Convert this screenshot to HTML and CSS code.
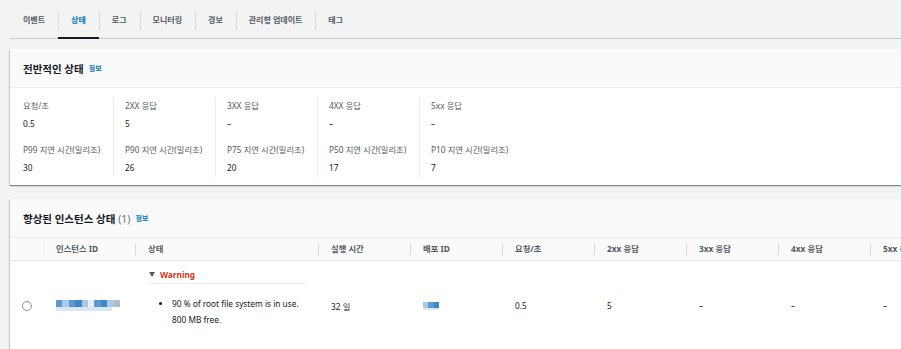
FILE: index.html
```html
<!DOCTYPE html>
<html lang="ko">
  <head>
    <meta charset="UTF-8" />
    <meta name="viewport" content="width=device-width, initial-scale=1.0" />
    <title>상태</title>
    <link rel="stylesheet" href="styles.css">
  </head>
  <body>
    <div class="tabs">
      <div class="tab">이벤트</div>
      <div class="tab active">상태</div>
      <div class="tab">로그</div>
      <div class="tab">모니터링</div>
      <div class="tab">경보</div>
      <div class="tab">관리형 업데이트</div>
      <div class="tab">태그</div>
    </div>

    <div class="panel">
      <div class="panel-head">
        <span class="title">전반적인 상태</span>
        <a class="info">정보</a>
      </div>
      <div class="stats">
        <div class="col">
          <div class="stat"><div class="label">요청/초</div><div class="value">0.5</div></div>
          <div class="stat"><div class="label">P99 지연 시간(밀리초)</div><div class="value">30</div></div>
        </div>
        <div class="col">
          <div class="stat"><div class="label">2XX 응답</div><div class="value">5</div></div>
          <div class="stat"><div class="label">P90 지연 시간(밀리초)</div><div class="value">26</div></div>
        </div>
        <div class="col">
          <div class="stat"><div class="label">3XX 응답</div><div class="value">–</div></div>
          <div class="stat"><div class="label">P75 지연 시간(밀리초)</div><div class="value">20</div></div>
        </div>
        <div class="col">
          <div class="stat"><div class="label">4XX 응답</div><div class="value">–</div></div>
          <div class="stat"><div class="label">P50 지연 시간(밀리초)</div><div class="value">17</div></div>
        </div>
        <div class="col">
          <div class="stat"><div class="label">5xx 응답</div><div class="value">–</div></div>
          <div class="stat"><div class="label">P10 지연 시간(밀리초)</div><div class="value">7</div></div>
        </div>
      </div>
    </div>

    <div class="panel">
      <div class="panel-head">
        <span class="title">향상된 인스턴스 상태 <span class="count">(1)</span></span>
        <a class="info">정보</a>
      </div>
      <table class="grid">
        <thead>
          <tr>
            <th class="c-radio"></th>
            <th class="c-id"><span>인스턴스 ID</span></th>
            <th class="c-status"><span>상태</span></th>
            <th><span>실행 시간</span></th>
            <th><span>배포 ID</span></th>
            <th><span>요청/초</span></th>
            <th><span>2xx 응답</span></th>
            <th><span>3xx 응답</span></th>
            <th><span>4xx 응답</span></th>
            <th><span>5xx 응답</span></th>
          </tr>
        </thead>
        <tbody>
          <tr>
            <td class="c-radio"><span class="radio"></span></td>
            <td class="c-id">
              <span class="mosaic">
                <i class="m1"></i><i class="m2"></i><i class="m1"></i><i class="m3"></i><i class="m2"></i><i class="m4"></i><i class="m1"></i><i class="m3"></i><i class="m2"></i><i class="m5"></i>
              </span>
            </td>
            <td class="c-status">
              <div class="warn"><span class="caret"></span>Warning</div>
              <ul class="causes">
                <li>90 % of root file system is in use. 800 MB free.</li>
              </ul>
            </td>
            <td>32 일</td>
            <td><span class="mosaic small"><i class="m2"></i><i class="m1"></i><i class="m3"></i></span></td>
            <td>0.5</td>
            <td>5</td>
            <td>–</td>
            <td>–</td>
            <td>–</td>
          </tr>
        </tbody>
      </table>
    </div>
  </body>
</html>
```

FILE: styles.css
```css
body {
  margin: 0;
  background-color: #f2f3f3;
  font-family: "Noto Sans", "Noto Sans CJK KR", sans-serif;
  font-size: 8.3px;
  color: #16191f;
  overflow: hidden;
}

.tabs {
  display: flex;
  margin-left: 10px;
  height: 38px;
  border-bottom: 1px solid #c3cbcf;
}

.tab {
  position: relative;
  padding: 0 13px;
  line-height: 40px;
  font-size: 8px;
  font-weight: bold;
  color: #545b64;
}

.tab + .tab::before {
  content: "";
  position: absolute;
  left: 0;
  top: 12px;
  height: 18px;
  border-left: 1px solid #d5dbdb;
}

.tab.active {
  color: #0073bb;
}

.tab.active::after {
  content: "";
  position: absolute;
  left: 0;
  right: 0;
  bottom: -1px;
  height: 2px;
  background-color: #16191f;
}

.panel {
  margin: 10px -40px 14px 10px;
  background-color: #fff;
  box-shadow: 0 1px 1px 0 rgba(0, 28, 36, 0.3), 1px 1px 1px 0 rgba(0, 28, 36, 0.15), -1px 1px 1px 0 rgba(0, 28, 36, 0.15);
}

.panel-head {
  height: 38px;
  padding-left: 13px;
  display: flex;
  align-items: center;
  background-color: #fafafa;
  border-bottom: 1px solid #eaeded;
}

.title {
  font-size: 10.5px;
  font-weight: bold;
}

.count {
  font-weight: normal;
  color: #687078;
}

.info {
  margin-left: 5px;
  font-size: 7px;
  font-weight: bold;
  color: #0073bb;
}

.stats {
  display: flex;
  padding: 9px 0 8px;
}

.col {
  width: 90px;
  padding-left: 11px;
  border-left: 1px solid #eaeded;
}

.col:first-child {
  width: 90px;
  padding-left: 13px;
  border-left: none;
}

.stat + .stat {
  margin-top: 8px;
}

.label {
  line-height: 18px;
  color: #545b64;
}

.value {
  line-height: 18px;
}

.grid {
  border-collapse: collapse;
  table-layout: fixed;
  width: 950px;
}

.grid th {
  height: 22px;
  padding: 0;
  text-align: left;
  font-weight: bold;
  color: #545b64;
  background-color: #fafafa;
  border-bottom: 1px solid #eaeded;
  width: 92px;
}

.grid th span {
  display: block;
  padding-left: 12px;
  border-left: 1px solid #d5dbdb;
  line-height: 12px;
}

.grid th.c-id span {
  padding-left: 11px;
  border-left-color: #eaeded;
}

.grid th.c-radio {
  width: 34px;
}

.grid th.c-id {
  width: 91px;
}

.grid th.c-status {
  width: 183px;
}

.grid td {
  height: 84px;
  padding: 0 0 0 13px;
  vertical-align: middle;
  border-bottom: 1px solid #eaeded;
}

.grid td.c-id {
  padding-left: 12px;
}

.grid td.c-radio {
  padding-left: 12px;
}

.grid td.c-status {
  vertical-align: top;
  padding-top: 5px;
}

.radio {
  display: block;
  width: 8px;
  height: 8px;
  border: 1px solid #879596;
  border-radius: 50%;
  margin-top: 1px;
}

.mosaic {
  display: flex;
  width: 64px;
  height: 12px;
  flex-wrap: wrap;
}

.mosaic i {
  width: 6.4px;
  height: 7px;
}

.mosaic::after {
  content: "";
  width: 56px;
  height: 4px;
  background-color: #dbe8f4;
}

.mosaic.small {
  width: 16px;
  height: 8px;
}

.mosaic.small i {
  width: 5.33px;
  height: 6px;
}

.mosaic.small::after {
  width: 16px;
  height: 2px;
}

.m1 { background-color: #5b9bd1; }
.m2 { background-color: #a9c9e8; }
.m3 { background-color: #3f86c5; }
.m4 { background-color: #e7eff8; }
.m5 { background-color: #b9b9b9; }

.warn {
  display: flex;
  align-items: center;
  width: 158px;
  height: 17px;
  border-bottom: 1px solid #eaeded;
  font-weight: bold;
  color: #d13212;
}

.caret {
  width: 0;
  height: 0;
  margin: 0 5px 0 1px;
  border-left: 3.5px solid transparent;
  border-right: 3.5px solid transparent;
  border-top: 5px solid #545b64;
}

.causes {
  margin: 12px 0 0;
  padding-left: 24px;
  width: 140px;
  line-height: 16px;
}
```
